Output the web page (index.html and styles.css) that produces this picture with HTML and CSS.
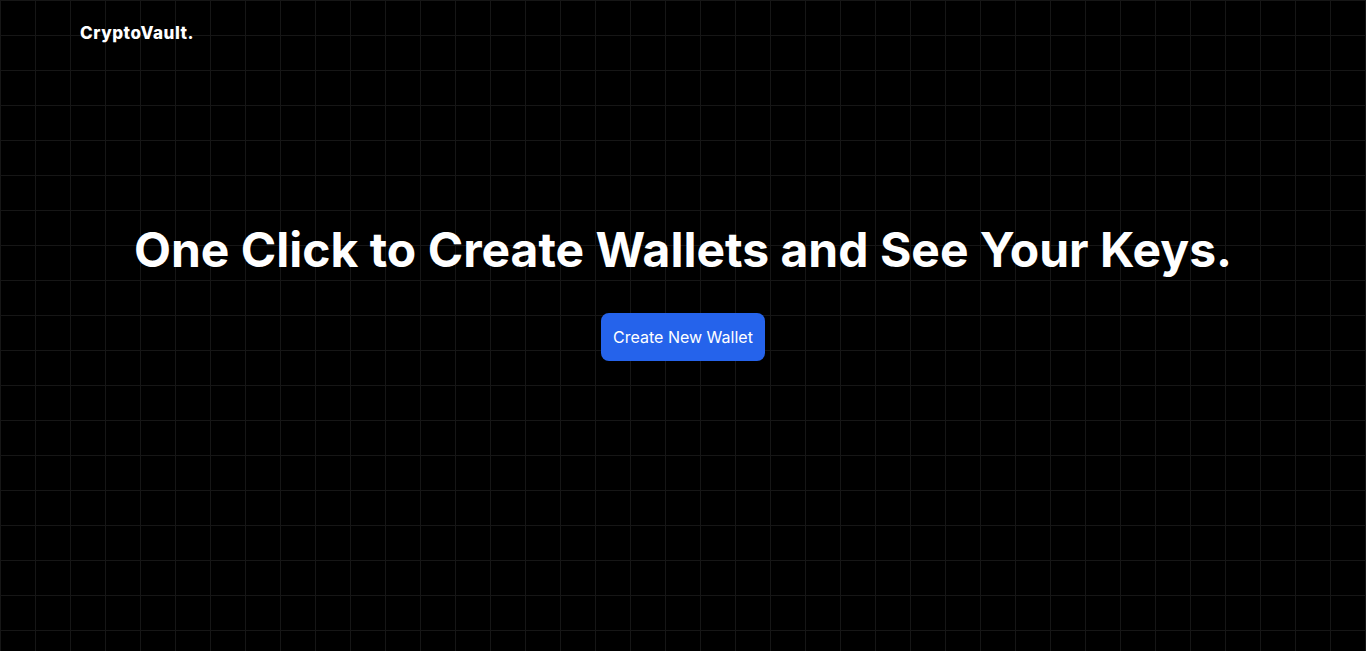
FILE: index.html
```html
<!DOCTYPE html>
<html lang="en">
<head>
<meta charset="utf-8">
<title>CryptoVault</title>
<link rel="stylesheet" href="styles.css">
</head>
<body>
<div class="page">
  <header class="nav">
    <span class="logo">CryptoVault.</span>
  </header>
  <main class="hero">
    <h1 class="title">One Click to Create Wallets and See Your Keys.</h1>
    <button class="btn">Create New Wallet</button>
  </main>
</div>
</body>
</html>
```
FILE: styles.css
```css
* { box-sizing: border-box; }
html, body { margin: 0; padding: 0; }
body {
  background-color: #000;
  background-image:
    linear-gradient(to right, #161616 1px, transparent 1px),
    linear-gradient(to bottom, #161616 1px, transparent 1px);
  background-size: 35px 35px;
  color: #fff;
  font-family: Inter, "Liberation Sans", sans-serif;
  min-height: 100vh;
}
.page {
  min-height: 100vh;
  display: flex;
  flex-direction: column;
}
.nav {
  padding: 23px 80px 0;
  height: 44px;
}
.logo {
  font-size: 17px;
  font-weight: 800;
  letter-spacing: 0.55px;
}
.hero {
  display: flex;
  flex-direction: column;
  align-items: center;
  padding-top: 176px;
}
.title {
  margin: 0;
  font-size: 48px;
  font-weight: 700;
  line-height: 60px;
}
.btn {
  margin-top: 33px;
  background: #2563eb;
  color: #fff;
  border: none;
  border-radius: 8px;
  height: 48px;
  padding: 0 12px;
  font-family: Inter, "Liberation Sans", sans-serif;
  font-size: 16px;
  font-weight: 400;
}
```
